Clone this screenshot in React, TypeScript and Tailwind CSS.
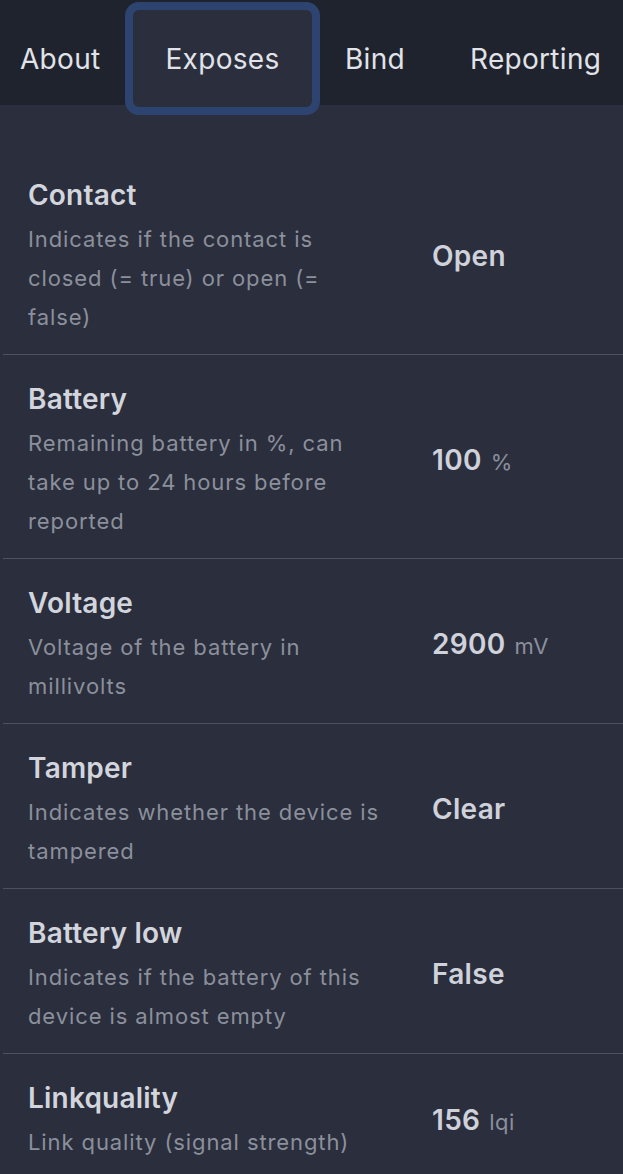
import React from "react";

interface Expose {
  title: string;
  description: string;
  value: string;
  unit?: string;
}

const exposes: Expose[] = [
  { title: "Contact", description: "Indicates if the contact is closed (= true) or open (= false)", value: "Open" },
  { title: "Battery", description: "Remaining battery in %, can take up to 24 hours before reported", value: "100", unit: "%" },
  { title: "Voltage", description: "Voltage of the battery in millivolts", value: "2900", unit: "mV" },
  { title: "Tamper", description: "Indicates whether the device is tampered", value: "Clear" },
  { title: "Battery low", description: "Indicates if the battery of this device is almost empty", value: "False" },
  { title: "Linkquality", description: "Link quality (signal strength)", value: "156", unit: "lqi" },
];

function Tabs() {
  return (
    <div className="flex h-[105px] items-start bg-[#1f232e] text-[28px] tracking-[0.3px] text-[#e1e3e9]">
      <div className="w-[125px] pl-5 leading-[34px] pt-[42px]">About</div>
      <div className="relative z-10 mt-[2px] h-[113px] w-[195px] rounded-[14px] border-[8px] border-[#2e4470] bg-[#2a2e3d] pt-[32px] text-center leading-[34px]">
        Exposes
      </div>
      <div className="w-[150px] pl-[25px] pt-[42px] leading-[34px]">Bind</div>
      <div className="pt-[42px] leading-[34px]">Reporting</div>
    </div>
  );
}

function ExposeRow({ item, last }: { item: Expose; last: boolean }) {
  return (
    <div className={`ml-[3px] flex items-center pl-[25px] pt-[26px] pb-[17px] ${last ? "" : "border-b border-[#4c5161]"}`}>
      <div className="w-[358px] shrink-0">
        <div className="text-[28px] font-semibold leading-[36px] tracking-[0.2px] text-[#d3d5dd]">{item.title}</div>
        <div className="mt-[7px] text-[22px] leading-[39px] tracking-[0.9px] text-[#8b909b]">{item.description}</div>
      </div>
      <div className="ml-[46px] -mt-[3px] whitespace-nowrap">
        <span className="text-[28px] font-semibold tracking-[0.3px] text-[#cfd2da]">{item.value}</span>
        {item.unit && <span className="ml-[9px] text-[22px] tracking-[0.5px] text-[#8b909b]">{item.unit}</span>}
      </div>
    </div>
  );
}

export default function App() {
  return (
    <div className="min-h-[1174px] w-[623px] overflow-hidden bg-[#2a2e3d] font-['Inter','Liberation_Sans',sans-serif]">
      <Tabs />
      <div className="pt-[46px]">
        {exposes.map((item, i) => (
          <ExposeRow key={item.title} item={item} last={i === exposes.length - 1} />
        ))}
      </div>
    </div>
  );
}
